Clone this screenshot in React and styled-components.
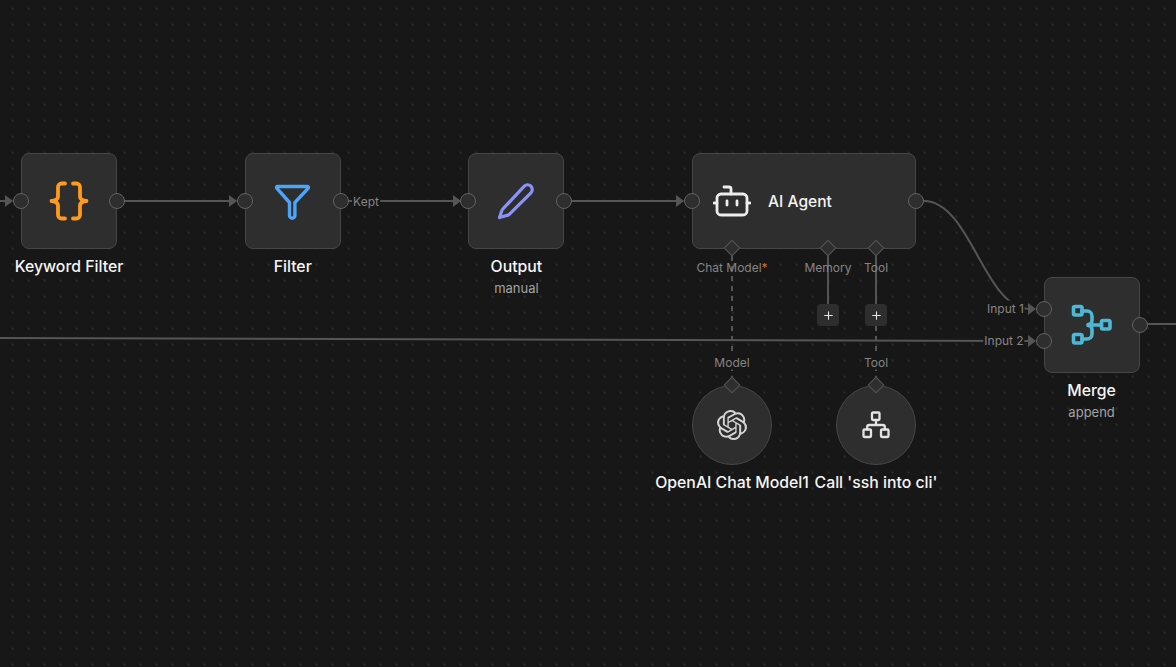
import React from "react"
import styled, { createGlobalStyle } from "styled-components"
import { SiOpenai } from "react-icons/si"
import { Plus } from "lucide-react"

const NODE_BG = "#2e2e2e"
const NODE_BORDER = "#464646"
const LINE = "#555555"

const GlobalStyle = createGlobalStyle`
  html, body {
    margin: 0;
    height: 100%;
    background: #171717;
    font-family: Inter, "Liberation Sans", sans-serif;
    overflow: hidden;
  }
`

function BracesIcon() {
  return (
    <IconSvg $w={40} $h={40} $color="#ff9a1f" viewBox="0 0 40 40" $sw={3.8}>
      <path d="M16 2.5h-3.5a3.5 3.5 0 0 0-3.5 3.5v9.5c0 2.4-1.6 4-6.5 4.5 4.9.5 6.5 2.1 6.5 4.5v9.5a3.5 3.5 0 0 0 3.5 3.5H16" />
      <path d="M24 2.5h3.5a3.5 3.5 0 0 1 3.5 3.5v9.5c0 2.4 1.6 4 6.5 4.5-4.9.5-6.5 2.1-6.5 4.5v9.5a3.5 3.5 0 0 1-3.5 3.5H24" />
    </IconSvg>
  )
}

function FunnelIcon() {
  return (
    <IconSvg $w={40} $h={40} $color="#4ea4f6" viewBox="0 0 40 40" $sw={3.4}>
      <path d="M4.5 5.5a1 1 0 0 0-.8 1.6L16.5 21.5v13a2.7 2.7 0 0 0 5.4 0v-13L35.3 7.1a1 1 0 0 0-.8-1.6z" />
    </IconSvg>
  )
}

function PenIcon() {
  return (
    <IconSvg $w={40} $h={40} $color="#8a93fa" viewBox="0 0 40 40" $sw={3.2}>
      <path d="M3.5 36.5l2.4-7a3 3 0 0 1 .8-1.3L28.3 5.2a4.6 4.6 0 0 1 6.6 6.6L13.3 33.3a3 3 0 0 1-1.3.8z" />
    </IconSvg>
  )
}

function BotIcon() {
  return (
    <IconSvg $w={38} $h={32} $color="#eeeeee" viewBox="0 0 38 32" $sw={2.8}>
      <path d="M18 9V4a2 2 0 0 0-2-2h-5" />
      <rect x="4" y="9" width="30" height="21" rx="4" />
      <path d="M1 18h3M34 18h3M14 16v4M24 16v4" />
    </IconSvg>
  )
}

function MergeIcon() {
  return (
    <IconSvg $w={42} $h={42} $color="#4db8d6" viewBox="0 0 42 42" $sw={3.6}>
      <rect x="2.5" y="2.5" width="8.5" height="8.5" rx="1.5" />
      <rect x="2.5" y="30.5" width="8.5" height="8.5" rx="1.5" />
      <rect x="30.5" y="16.5" width="8.5" height="8.5" rx="1.5" />
      <path d="M11 7h5a5 5 0 0 1 5 5v4.5a4 4 0 0 1-4 4M11 35h5a5 5 0 0 0 5-5v-4.5a4 4 0 0 0-4-4M21 21h9.5" />
    </IconSvg>
  )
}

function NetworkIcon() {
  return (
    <IconSvg $w={28} $h={28} $color="#e4e4e4" viewBox="0 0 28 28" $sw={2.3}>
      <rect x="10" y="1.5" width="7.5" height="7.5" rx="1" />
      <rect x="1.5" y="18.5" width="7.5" height="7.5" rx="1" />
      <rect x="19" y="18.5" width="7.5" height="7.5" rx="1" />
      <path d="M14 9v5M5.2 18.5v-2.5a2 2 0 0 1 2-2h13.6a2 2 0 0 1 2 2v2.5" />
    </IconSvg>
  )
}

function Node({ x, y, wide, round, icon, title, sub, children }) {
  return (
    <NodeSlot $x={x} $y={y}>
      <Card $wide={wide} $round={round}>
        {icon}
        {wide && <AgentTitle>{title}</AgentTitle>}
        {children}
      </Card>
      {!wide && (
        <Caption>
          <Title>{title}</Title>
          {sub && <Sub>{sub}</Sub>}
        </Caption>
      )}
    </NodeSlot>
  )
}

export default function App() {
  return (
    <Canvas>
      <GlobalStyle />
      <Edges viewBox="0 0 1176 667">
        <Wire d="M0 201H6" />
        <Wire d="M124 201H230" />
        <Wire d="M348 201H454" />
        <Wire d="M572 201H677" />
        <Wire d="M924 201C970 201 985 309 1029 309" />
        <Wire d="M0 338L1029 341" />
        <Wire d="M1147 324H1176" />
        <Arrow points="5,195 13,201 5,207" />
        <Arrow points="229,195 237,201 229,207" />
        <Arrow points="453,195 461,201 453,207" />
        <Arrow points="676,195 684,201 676,207" />
        <Arrow points="1028,303 1036,309 1028,315" />
        <Arrow points="1028,335 1036,341 1028,347" />
        <Wire d="M828 256V304M876 256V304" />
        <Wire d="M732 256V377M876 326V377" strokeDasharray="5 5" />
      </Edges>

      <Node x={21} y={153} icon={<BracesIcon />} title="Keyword Filter">
        <Handle $side="left" />
        <Handle $side="right" />
      </Node>
      <Node x={244.7} y={153} icon={<FunnelIcon />} title="Filter">
        <Handle $side="left" />
        <Handle $side="right" />
      </Node>
      <Node x={468.4} y={153} icon={<PenIcon />} title="Output" sub="manual">
        <Handle $side="left" />
        <Handle $side="right" />
      </Node>
      <Node x={692} y={153} wide icon={<BotIcon />} title="AI Agent">
        <Handle $side="left" />
        <Handle $side="right" />
        <Port $left={40} $edge="bottom" />
        <Port $left={136} $edge="bottom" />
        <Port $left={184} $edge="bottom" />
      </Node>
      <Node x={1043.6} y={277} icon={<MergeIcon />} title="Merge" sub="append">
        <Handle $side="left" $at={32} />
        <Handle $side="left" $at={64} />
        <Handle $side="right" />
      </Node>
      <Node x={692} y={385} round icon={<OpenAiGlyph />} title="OpenAI Chat Model1">
        <Port $left={40} $edge="top" />
      </Node>
      <Node x={836} y={385} round icon={<NetworkIcon />} title="Call 'ssh into cli'">
        <Port $left={40} $edge="top" />
      </Node>

      <EdgeLabel $x={366} $y={201}>Kept</EdgeLabel>
      <EdgeLabel $x={732} $y={267} $plain>
        Chat Model<Required>*</Required>
      </EdgeLabel>
      <EdgeLabel $x={828} $y={267} $plain>Memory</EdgeLabel>
      <EdgeLabel $x={876} $y={267} $plain>Tool</EdgeLabel>
      <EdgeLabel $x={732} $y={362}>Model</EdgeLabel>
      <EdgeLabel $x={876} $y={362}>Tool</EdgeLabel>
      <EdgeLabel $x={1005.5} $y={308}>Input 1</EdgeLabel>
      <EdgeLabel $x={1004} $y={340}>Input 2</EdgeLabel>

      <AddButton $x={828} $y={315}><Plus size={13} strokeWidth={2} /></AddButton>
      <AddButton $x={876} $y={315}><Plus size={13} strokeWidth={2} /></AddButton>
    </Canvas>
  )
}

const Canvas = styled.div`
  position: relative;
  width: 1176px;
  height: 667px;
  overflow: hidden;
  background-color: #171717;
  background-image: radial-gradient(circle at center, #3f3f3f 0.55px, transparent 0.85px);
  background-size: 16px 16px;
  background-position: 4.5px 0.5px;
`

const Edges = styled.svg`
  position: absolute;
  inset: 0;
  width: 1176px;
  height: 667px;
`

const Wire = styled.path`
  fill: none;
  stroke: ${LINE};
  stroke-width: 2;
`

const Arrow = styled.polygon`
  fill: ${LINE};
`

const IconSvg = styled.svg.attrs({ fill: "none", strokeLinecap: "round", strokeLinejoin: "round" })`
  width: ${(p) => p.$w}px;
  height: ${(p) => p.$h}px;
  stroke: ${(p) => p.$color};
  stroke-width: ${(p) => p.$sw};
  flex-shrink: 0;
`

const NodeSlot = styled.div`
  position: absolute;
  left: ${(p) => p.$x}px;
  top: ${(p) => p.$y}px;
`

const Card = styled.div`
  position: relative;
  box-sizing: border-box;
  width: ${(p) => (p.$wide ? "224px" : p.$round ? "80px" : "96px")};
  height: ${(p) => (p.$round ? "80px" : "96px")};
  display: flex;
  align-items: center;
  justify-content: ${(p) => (p.$wide ? "flex-start" : "center")};
  gap: 17px;
  padding-left: ${(p) => (p.$wide ? "20px" : "0")};
  background: ${NODE_BG};
  border: 1px solid ${NODE_BORDER};
  border-radius: ${(p) => (p.$round ? "50%" : "8px")};
`

const AgentTitle = styled.span`
  color: #f2f2f2;
  font-size: 15.6px;
  font-weight: 500;
`

const Caption = styled.div`
  position: absolute;
  top: 100%;
  left: 50%;
  transform: translateX(-50%);
  margin-top: 8px;
  display: flex;
  flex-direction: column;
  align-items: center;
  gap: 2px;
  white-space: nowrap;
`

const Title = styled.span`
  color: #f5f5f5;
  font-size: 15.8px;
  font-weight: 500;
  line-height: 20px;
`

const Sub = styled.span`
  color: #a3a3a3;
  font-size: 13px;
  line-height: 18px;
`

const Handle = styled.span`
  position: absolute;
  box-sizing: border-box;
  width: 16px;
  height: 16px;
  top: ${(p) => (p.$at ? p.$at - 9 : 39)}px;
  ${(p) => (p.$side === "left" ? "left: -9px;" : "right: -9px;")}
  background: ${NODE_BG};
  border: 1px solid #636363;
  border-radius: 50%;
`

const Port = styled.span`
  position: absolute;
  box-sizing: border-box;
  width: 12px;
  height: 12px;
  left: ${(p) => p.$left - 7}px;
  ${(p) => (p.$edge === "top" ? "top: -7px;" : "bottom: -6px;")}
  background: ${NODE_BG};
  border: 1px solid #565656;
  transform: rotate(45deg);
`

const EdgeLabel = styled.span`
  position: absolute;
  left: ${(p) => p.$x}px;
  top: ${(p) => p.$y}px;
  transform: translate(-50%, -50%);
  padding: 0 1px;
  background: ${(p) => (p.$plain ? "transparent" : "#171717")};
  color: #858585;
  font-size: 12px;
  line-height: 15px;
  white-space: nowrap;
`

const Required = styled.span`
  color: #d9691f;
`

const AddButton = styled.span`
  position: absolute;
  left: ${(p) => p.$x}px;
  top: ${(p) => p.$y}px;
  transform: translate(-50%, -50%);
  width: 22px;
  height: 22px;
  display: flex;
  align-items: center;
  justify-content: center;
  background: #2e2e2e;
  border-radius: 4px;
  color: #e6e6e6;
`

const OpenAiGlyph = styled(SiOpenai).attrs({ size: 30 })`
  color: #d4d4d4;
`
